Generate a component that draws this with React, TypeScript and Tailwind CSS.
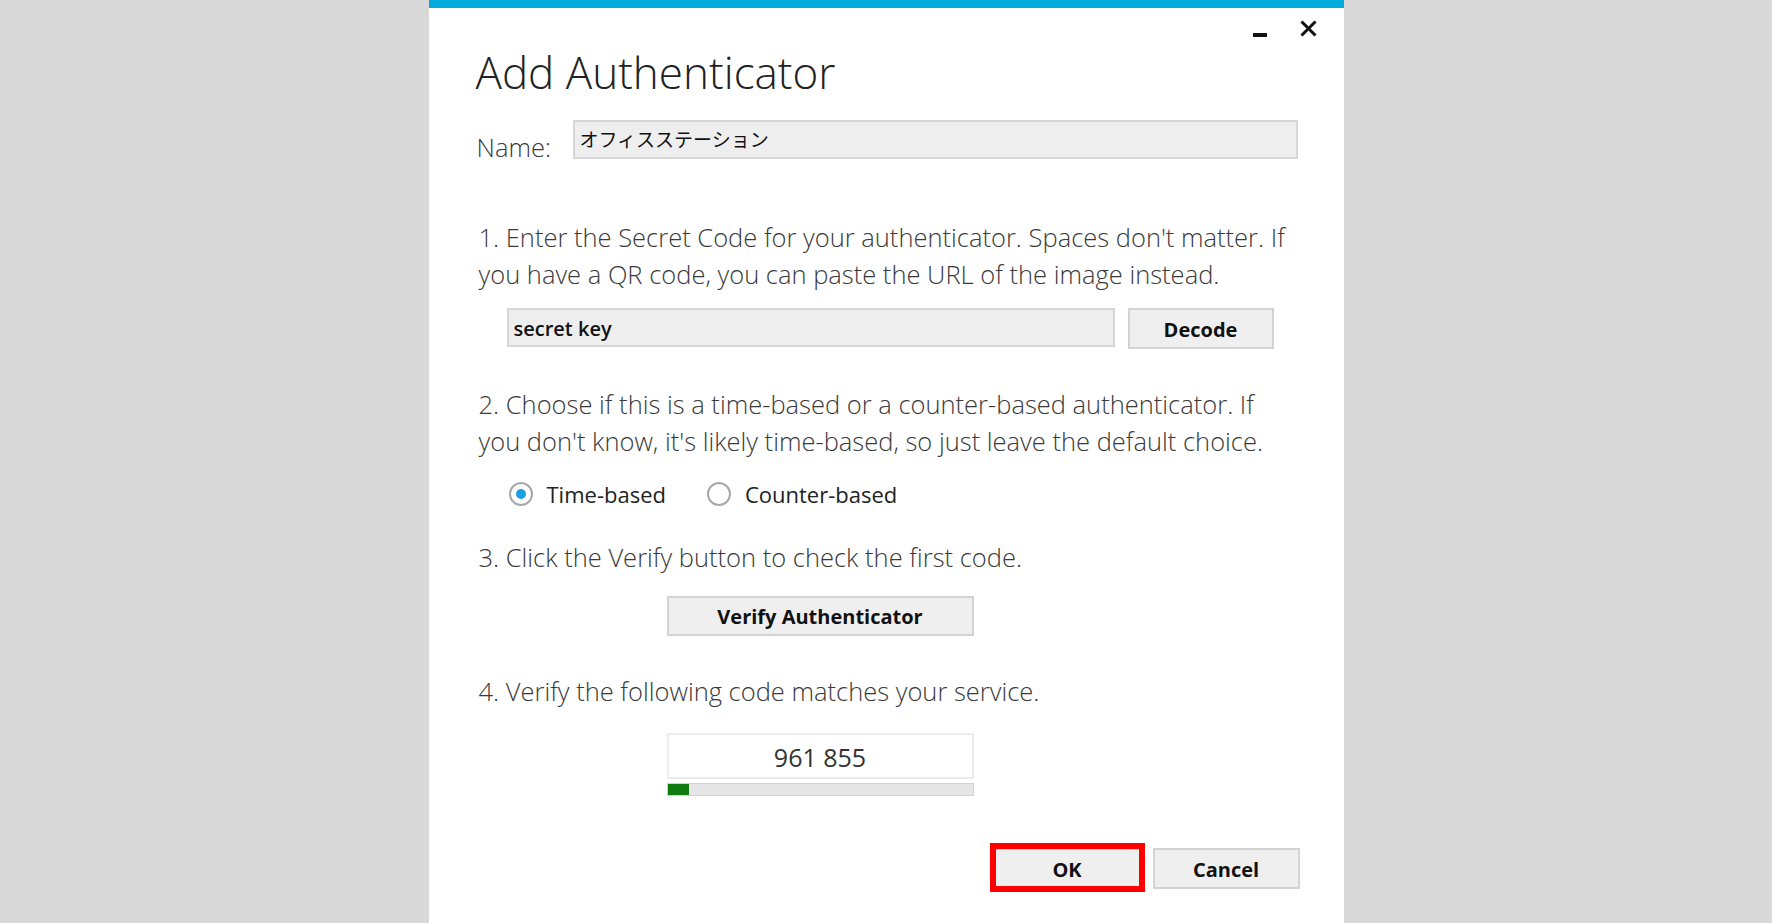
import React, { useState } from "react"

const font = "font-['Open_Sans','Noto_Sans_CJK_JP',sans-serif]"

function Radio({ checked, label, onClick }: { checked: boolean; label: string; onClick: () => void }) {
  return (
    <button onClick={onClick} className="flex items-center gap-[14px]">
      <span className="w-[24px] h-[24px] rounded-full border-2 border-[#a8a8a8] bg-white flex items-center justify-center">
        {checked && <span className="w-[10px] h-[10px] rounded-full bg-[#1ba1e2]" />}
      </span>
      <span className="text-[22px] leading-[24px] text-[#222]">{label}</span>
    </button>
  )
}

export default function App() {
  const [mode, setMode] = useState<"time" | "counter">("time")

  return (
    <div className={`min-h-[923px] w-full bg-[#d9d9d9] flex justify-center ${font}`}>
      <div className="relative w-[915px] min-h-[923px] bg-white flex flex-col">
        <div className="h-[8px] bg-[#00acdc]" />

        {/* window controls */}
        <div className="absolute left-[824px] top-[33px] w-[14px] h-[4px] bg-[#111]" />
        <svg className="absolute left-[871px] top-[20px]" width="17" height="17" viewBox="0 0 17 17">
          <path d="M1.5 1.5 L15.5 15.5 M15.5 1.5 L1.5 15.5" stroke="#111" strokeWidth="3" />
        </svg>

        <div className="pl-[47px] pr-[46px] flex flex-col text-[#3a3a3a]">
          <h1 className="mt-[38px] text-[44px] leading-[52px] font-light text-[#222]">Add Authenticator</h1>

          {/* name */}
          <div className="mt-[22px] flex items-end">
            <label className="w-[97px] pl-[1px] pb-[1px] text-[25.5px] leading-[22px] font-light">Name:</label>
            <div className="flex-1 h-[39px] bg-[#eeeeee] border-2 border-[#d6d6d6] flex items-center pl-[5px] text-[19px] text-[#111] font-['Noto_Sans_CJK_JP',sans-serif]">
              オフィスステーション
            </div>
          </div>

          {/* step 1 */}
          <p className="mt-[60px] pl-[3px] text-[25.5px] leading-[37px] font-light whitespace-nowrap">
            1. Enter the Secret Code for your authenticator. Spaces don't matter. If
            <br />
            you have a QR code, you can paste the URL of the image instead.
          </p>
          <div className="mt-[15px] ml-[31px] flex items-start gap-[13px]">
            <div className="w-[608px] h-[39px] bg-[#eeeeee] border-2 border-[#d6d6d6] flex items-center pl-[5px] pt-[3px] text-[20px] font-semibold text-[#111]">
              secret key
            </div>
            <button className="w-[146px] h-[41px] bg-[#efefef] border-2 border-[#d3d3d3] pt-[2px] text-[20px] font-bold text-[#111]">
              Decode
            </button>
          </div>

          {/* step 2 */}
          <p className="mt-[37px] pl-[3px] text-[25.5px] leading-[37px] font-light whitespace-nowrap">
            2. Choose if this is a time-based or a counter-based authenticator. If
            <br />
            you don't know, it's likely time-based, so just leave the default choice.
          </p>
          <div className="mt-[22px] ml-[33px] flex items-center gap-[41px]">
            <Radio checked={mode === "time"} label="Time-based" onClick={() => setMode("time")} />
            <Radio checked={mode === "counter"} label="Counter-based" onClick={() => setMode("counter")} />
          </div>

          {/* step 3 */}
          <p className="mt-[33px] pl-[3px] text-[25.5px] leading-[37px] font-light whitespace-nowrap">
            3. Click the Verify button to check the first code.
          </p>
          <button className="mt-[20px] ml-[191px] w-[307px] h-[40px] bg-[#efefef] border-2 border-[#d3d3d3] pt-[2px] text-[20px] font-bold text-[#111]">
            Verify Authenticator
          </button>

          {/* step 4 */}
          <p className="mt-[37px] pl-[3px] text-[25.5px] leading-[37px] font-light whitespace-nowrap">
            4. Verify the following code matches your service.
          </p>
          <div className="mt-[23px] ml-[191px] w-[307px] h-[46px] bg-white border-2 border-[#ececec] flex items-center justify-center pt-[4px] text-[25px] text-[#333]">
            961 855
          </div>
          <div className="mt-[4px] ml-[191px] w-[307px] h-[13px] bg-[#e6e6e6] border border-[#d2d2d2]">
            <div className="h-full w-[21px] bg-[#107c10]" />
          </div>

          {/* footer buttons */}
          <div className="mt-[52px] mr-[-2px] flex justify-end gap-[12px]">
            <div className="relative">
              <button className="w-[147px] h-[41px] bg-[#efefef] border-2 border-[#d3d3d3] pt-[2px] text-[20px] font-bold text-[#111]">
                OK
              </button>
              <div className="absolute left-[-4px] right-[-4px] top-[-5px] bottom-[-3px] border-[6px] border-[#ff0000] pointer-events-none" />
            </div>
            <button className="w-[147px] h-[41px] bg-[#efefef] border-2 border-[#d3d3d3] pt-[2px] text-[20px] font-bold text-[#111]">
              Cancel
            </button>
          </div>
        </div>
      </div>
    </div>
  )
}
